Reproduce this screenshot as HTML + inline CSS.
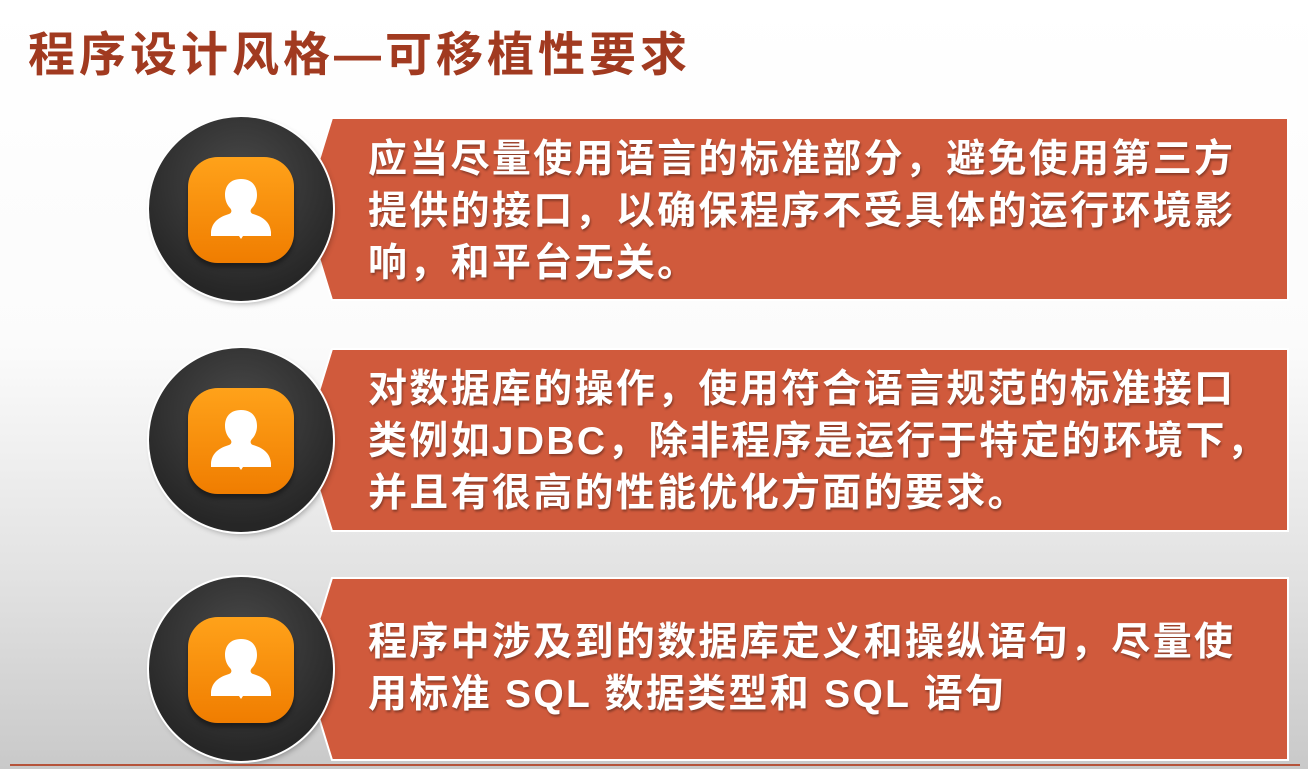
<!DOCTYPE html>
<html><head><meta charset="utf-8"><style>
body{margin:0;width:1308px;height:769px;overflow:hidden;position:relative;
background:linear-gradient(#fff 0%,#fbfbfb 45%,#e2e2e2 75%,#c9c9c9 100%);
font-family:"Liberation Sans","Noto Sans CJK SC",sans-serif;}
.title{position:absolute;left:28px;top:16px;font-size:47px;font-weight:bold;color:#a13a20;letter-spacing:4px;}
.ban{position:absolute;left:300px;width:990px;height:184px;}
.ban svg{position:absolute;left:0;top:0}
.txt{position:absolute;left:68px;color:#fff;font-size:39px;letter-spacing:2.3px;font-weight:bold;line-height:52px;text-shadow:1px 2px 2px rgba(0,0,0,.35);white-space:nowrap}
.circ{position:absolute;left:149px;width:184px;height:184px;border-radius:50%;background:radial-gradient(circle at 50% 35%,#4a4a4a,#262626 75%);box-shadow:0 0 0 2px #fff,2px 3px 6px rgba(0,0,0,.3)}
.sq{position:absolute;left:39px;top:40px;width:106px;height:106px;border-radius:30px;background:linear-gradient(#ffa21a,#f07d00);box-shadow:0 4px 4px rgba(0,0,0,.4)}
.line{position:absolute;left:10px;right:8px;top:764px;height:2px;background:#b5533a}
</style></head><body>
<div class="title">程序设计风格—可移植性要求</div>

<div class="ban" style="top:117px"><svg width="990" height="184"><polygon points="32,1 988,1 988,183 32,183 4,92" fill="#d05a3c" stroke="#fff" stroke-width="2"/></svg>
<div class="txt" style="top:17px">应当尽量使用语言的标准部分，避免使用第三方<br>提供的接口，以确保程序不受具体的运行环境影<br>响，和平台无关。</div></div>
<div class="ban" style="top:348px"><svg width="990" height="184"><polygon points="32,1 988,1 988,183 32,183 4,92" fill="#d05a3c" stroke="#fff" stroke-width="2"/></svg>
<div class="txt" style="top:16px">对数据库的操作，使用符合语言规范的标准接口<br>类例如JDBC，除非程序是运行于特定的环境下，<br>并且有很高的性能优化方面的要求。</div></div>
<div class="ban" style="top:577px"><svg width="990" height="184"><polygon points="32,1 988,1 988,183 32,183 4,92" fill="#d05a3c" stroke="#fff" stroke-width="2"/></svg>
<div class="txt" style="top:40px">程序中涉及到的数据库定义和操纵语句，尽量使<br>用标准 SQL 数据类型和 SQL 语句</div></div>

<div class="circ" style="top:117px"><div class="sq"><svg width="106" height="106" viewBox="0 0 106 106"><path d="M53 22c-11 0-16 7-16 16 0 5 2 10 5 13 2 2 2 5-1 6-10 3-17 8-18 18l0 4 28 0 2 3 2-3 28 0 0-4c-1-10-8-15-18-18-3-1-3-4-1-6 3-3 5-8 5-13 0-9-5-16-16-16z" fill="#fff"/></svg></div></div>
<div class="circ" style="top:348px"><div class="sq"><svg width="106" height="106" viewBox="0 0 106 106"><path d="M53 22c-11 0-16 7-16 16 0 5 2 10 5 13 2 2 2 5-1 6-10 3-17 8-18 18l0 4 28 0 2 3 2-3 28 0 0-4c-1-10-8-15-18-18-3-1-3-4-1-6 3-3 5-8 5-13 0-9-5-16-16-16z" fill="#fff"/></svg></div></div>
<div class="circ" style="top:577px"><div class="sq"><svg width="106" height="106" viewBox="0 0 106 106"><path d="M53 22c-11 0-16 7-16 16 0 5 2 10 5 13 2 2 2 5-1 6-10 3-17 8-18 18l0 4 28 0 2 3 2-3 28 0 0-4c-1-10-8-15-18-18-3-1-3-4-1-6 3-3 5-8 5-13 0-9-5-16-16-16z" fill="#fff"/></svg></div></div>
<div class="line"></div>
</body></html>
